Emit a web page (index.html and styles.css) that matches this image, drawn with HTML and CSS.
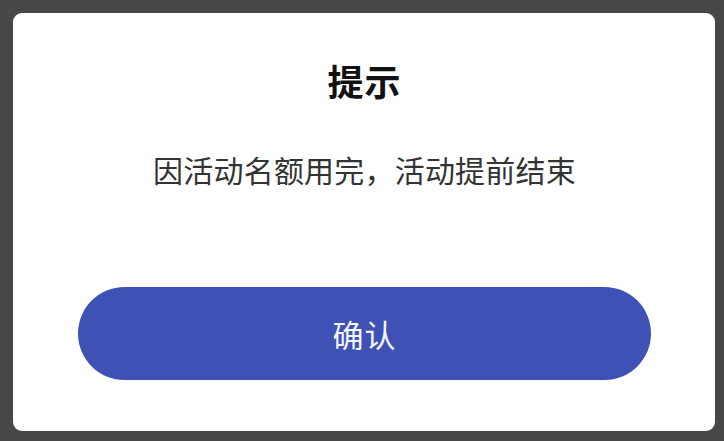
FILE: index.html
```html
<!DOCTYPE html>
<html lang="zh-CN">
<head>
<meta charset="utf-8">
<title>提示</title>
<link rel="stylesheet" href="styles.css">
</head>
<body>
<div class="dialog">
  <h1 class="dialog-title">提示</h1>
  <p class="dialog-message">因活动名额用完，活动提前结束</p>
  <button class="dialog-button" type="button">确认</button>
</div>
</body>
</html>
```
FILE: styles.css
```css
html, body {
  margin: 0;
  padding: 0;
}
body {
  background: #474747;
  width: 724px;
  height: 441px;
  padding: 13px 9px 10px 13px;
  box-sizing: border-box;
  font-family: "Noto Sans CJK SC", "Noto Sans", sans-serif;
}
.dialog {
  width: 702px;
  height: 418px;
  background: #ffffff;
  border-radius: 9px;
  box-sizing: border-box;
  padding: 47px 64px 0 65px;
  display: flex;
  flex-direction: column;
  align-items: center;
}
.dialog-title {
  margin: 0;
  font-size: 36px;
  line-height: 40px;
  font-weight: 700;
  color: #111111;
  letter-spacing: 1px;
}
.dialog-message {
  margin: 49px 0 0 0;
  font-size: 30px;
  line-height: 40px;
  color: #333333;
  letter-spacing: 0.2px;
}
.dialog-button {
  margin-top: 98px;
  width: 573px;
  height: 93px;
  border: none;
  border-radius: 47px;
  background: #3f51b5;
  color: #f4f5fb;
  font-family: "Noto Sans CJK SC", "Noto Sans", sans-serif;
  font-size: 31px;
  letter-spacing: 1px;
  padding: 0;
}
```
